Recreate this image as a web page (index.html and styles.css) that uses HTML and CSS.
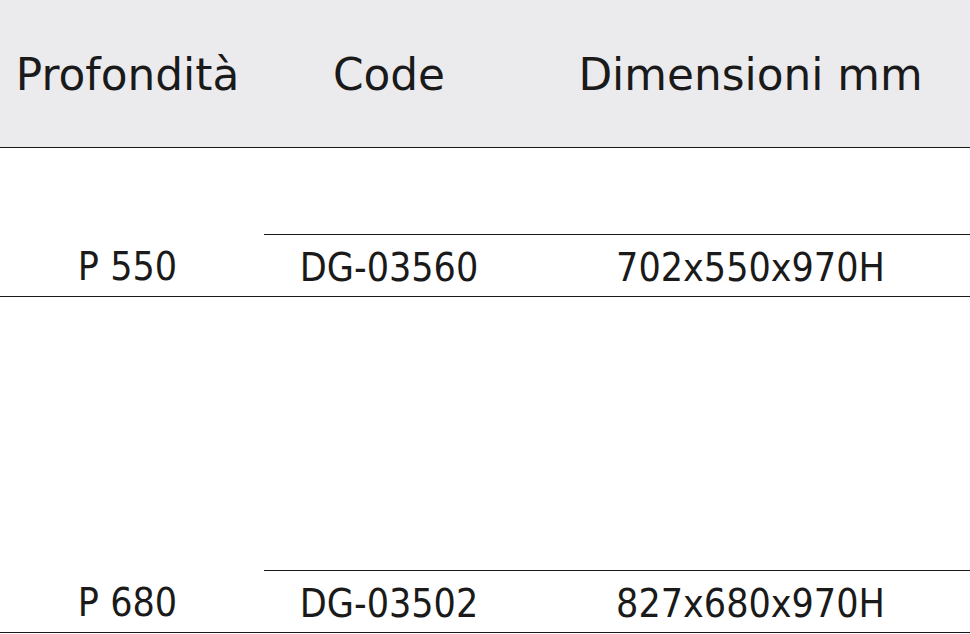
FILE: index.html
```html
<!DOCTYPE html>
<html lang="it">
<head>
<meta charset="utf-8">
<title>Tabella dimensioni</title>
<link rel="stylesheet" href="styles.css">
</head>
<body>
<div class="table">
  <div class="head">
    <div class="hcell c1">Profondità</div>
    <div class="hcell c2">Code</div>
    <div class="hcell c3">Dimensioni mm</div>
  </div>
  <div class="group g1">
    <div class="cell c1 span">P 550</div>
    <div class="cell c2 data">DG-03560</div>
    <div class="cell c3 data">702x550x970H</div>
  </div>
  <div class="group g2">
    <div class="cell c1 span">P 680</div>
    <div class="cell c2 data">DG-03502</div>
    <div class="cell c3 data">827x680x970H</div>
  </div>
</div>
</body>
</html>
```
FILE: styles.css
```css
html, body {
  margin: 0;
  padding: 0;
  background: #ffffff;
}
.table {
  width: 970px;
  font-family: "DejaVu Sans Condensed", "DejaVu Sans", Verdana, sans-serif;
  color: #1a1a1a;
}
.head {
  display: grid;
  grid-template-columns: 264px 250px 1fr;
  height: 147px;
  background: #ebebed;
  border-bottom: 1px solid #1a1a1a;
}
.hcell {
  display: flex;
  align-items: center;
  justify-content: center;
  font-family: "DejaVu Sans", Verdana, sans-serif;
  font-size: 43.8px;
  padding-top: 2px;
}
.c1 { padding-right: 9px; }
.c3 { padding-left: 17px; }
.group {
  display: grid;
  grid-template-columns: 264px 250px 1fr;
  border-bottom: 1px solid #1a1a1a;
}
.g1 { grid-template-rows: 86px 62px; }
.g2 { grid-template-rows: 273px 62px; }
.cell {
  display: flex;
  justify-content: center;
  align-items: center;
  font-size: 39px;
  padding-top: 3px;
  box-sizing: border-box;
}
.span {
  grid-row: 1 / 3;
  grid-column: 1;
  align-self: end;
  height: 62px;
}
.data {
  grid-row: 2;
  border-top: 1px solid #1a1a1a;
}
.data.c2 { grid-column: 2; }
.data.c3 { grid-column: 3; }
```
